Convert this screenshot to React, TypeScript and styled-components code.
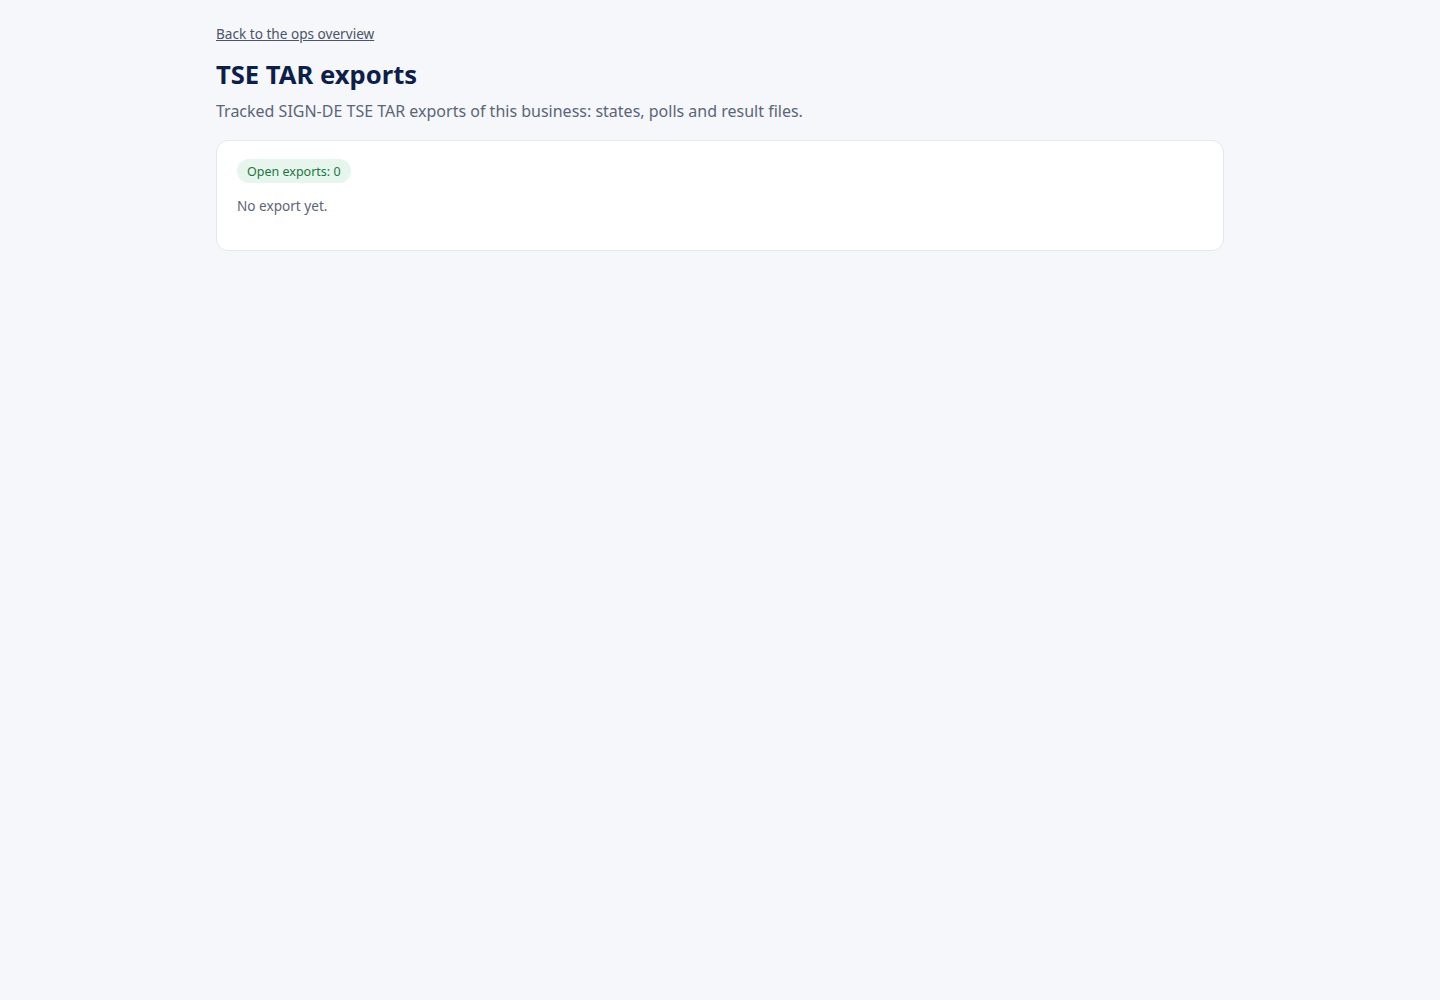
import React from "react";
import styled, { createGlobalStyle } from "styled-components";

const Global = createGlobalStyle`
  html, body { margin: 0; padding: 0; }
  body {
    background: #f5f7fb;
    font-family: "Noto Sans", "Open Sans", sans-serif;
    color: #1f2a44;
  }
`;

const Page = styled.main`
  max-width: 1008px;
  margin: 0 auto;
  padding: 24px 0 40px;
  display: flex;
  flex-direction: column;
`;

const BackLink = styled.a`
  font-size: 13.6px;
  line-height: 20px;
  color: #4b5567;
  text-decoration: underline;
  align-self: flex-start;
  cursor: pointer;
`;

const Title = styled.h1`
  margin: 14px 0 0;
  font-size: 25.6px;
  line-height: 34px;
  font-weight: 700;
  color: #0c1f4a;
`;

const Subtitle = styled.p`
  margin: 8px 0 0;
  font-size: 16px;
  line-height: 22px;
  color: #5b6577;
`;

const Card = styled.section`
  margin-top: 18px;
  background: #ffffff;
  border: 1px solid #e3e7ee;
  border-radius: 12px;
  padding: 18px 20px 34px;
  display: flex;
  flex-direction: column;
  align-items: flex-start;
  gap: 13px;
`;

const Pill = styled.span`
  display: inline-flex;
  align-items: center;
  height: 24px;
  padding: 0 10px;
  border-radius: 999px;
  background: #e6f6ec;
  color: #1d7544;
  font-size: 12.5px;
`;

const Empty = styled.p`
  margin: 0;
  font-size: 13.6px;
  line-height: 20px;
  color: #5b6577;
`;

export default function App() {
  return (
    <>
      <Global />
      <Page>
        <BackLink>Back to the ops overview</BackLink>
        <Title>TSE TAR exports</Title>
        <Subtitle>
          Tracked SIGN-DE TSE TAR exports of this business: states, polls and result files.
        </Subtitle>
        <Card>
          <Pill>Open exports: 0</Pill>
          <Empty>No export yet.</Empty>
        </Card>
      </Page>
    </>
  );
}
